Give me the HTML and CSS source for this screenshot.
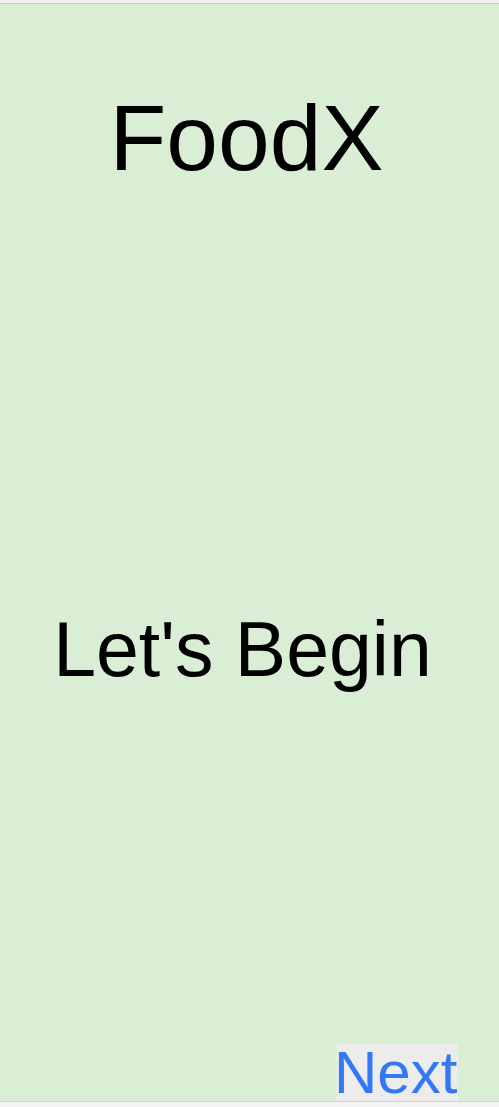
FILE: index.html
```html
<!DOCTYPE html>
<html>
<head>
<meta charset="utf-8">
<title>FoodX</title>
<link rel="stylesheet" href="styles.css">
</head>
<body>
<div class="topbar"></div>
<main class="screen">
  <h1 class="brand">FoodX</h1>
  <h2 class="tagline">Let's Begin</h2>
  <div class="footer">
    <button class="next">Next</button>
  </div>
</main>
<div class="bottombar"></div>
</body>
</html>
```
FILE: styles.css
```css
html, body {
  margin: 0;
  padding: 0;
}
body {
  background: #f4f4f5;
  font-family: "Liberation Sans", Arial, sans-serif;
  width: 499px;
  height: 1107px;
  overflow: hidden;
}
.topbar {
  height: 3px;
  background: #efeff0;
  border-bottom: 1px solid #c8c8cd;
}
.screen {
  height: 1097px;
  background: #d9eed5;
  display: flex;
  flex-direction: column;
  align-items: center;
  padding-right: 14px;
  box-sizing: border-box;
}
.brand {
  margin: 88px 0 0 8px;
  font-size: 93px;
  font-weight: normal;
  line-height: 1;
  color: #000;
}
.tagline {
  margin: 426px 0 0 0;
  font-size: 77px;
  font-weight: normal;
  line-height: 1;
  color: #000;
}
.footer {
  margin-top: auto;
  align-self: stretch;
  display: flex;
  justify-content: flex-end;
  padding-right: 27px;
}
.next {
  font-family: "Liberation Sans", Arial, sans-serif;
  font-size: 60px;
  line-height: 57px;
  height: 57px;
  width: 121px;
  padding: 0;
  margin: 0;
  border: none;
  background: #ececec;
  color: #3478f6;
  text-align: left;
  text-indent: -3px;
  white-space: nowrap;
  overflow: visible;
}
.bottombar {
  height: 6px;
  border-top: 1px solid #d4d4d6;
  background: #f4f4f5;
}
```
